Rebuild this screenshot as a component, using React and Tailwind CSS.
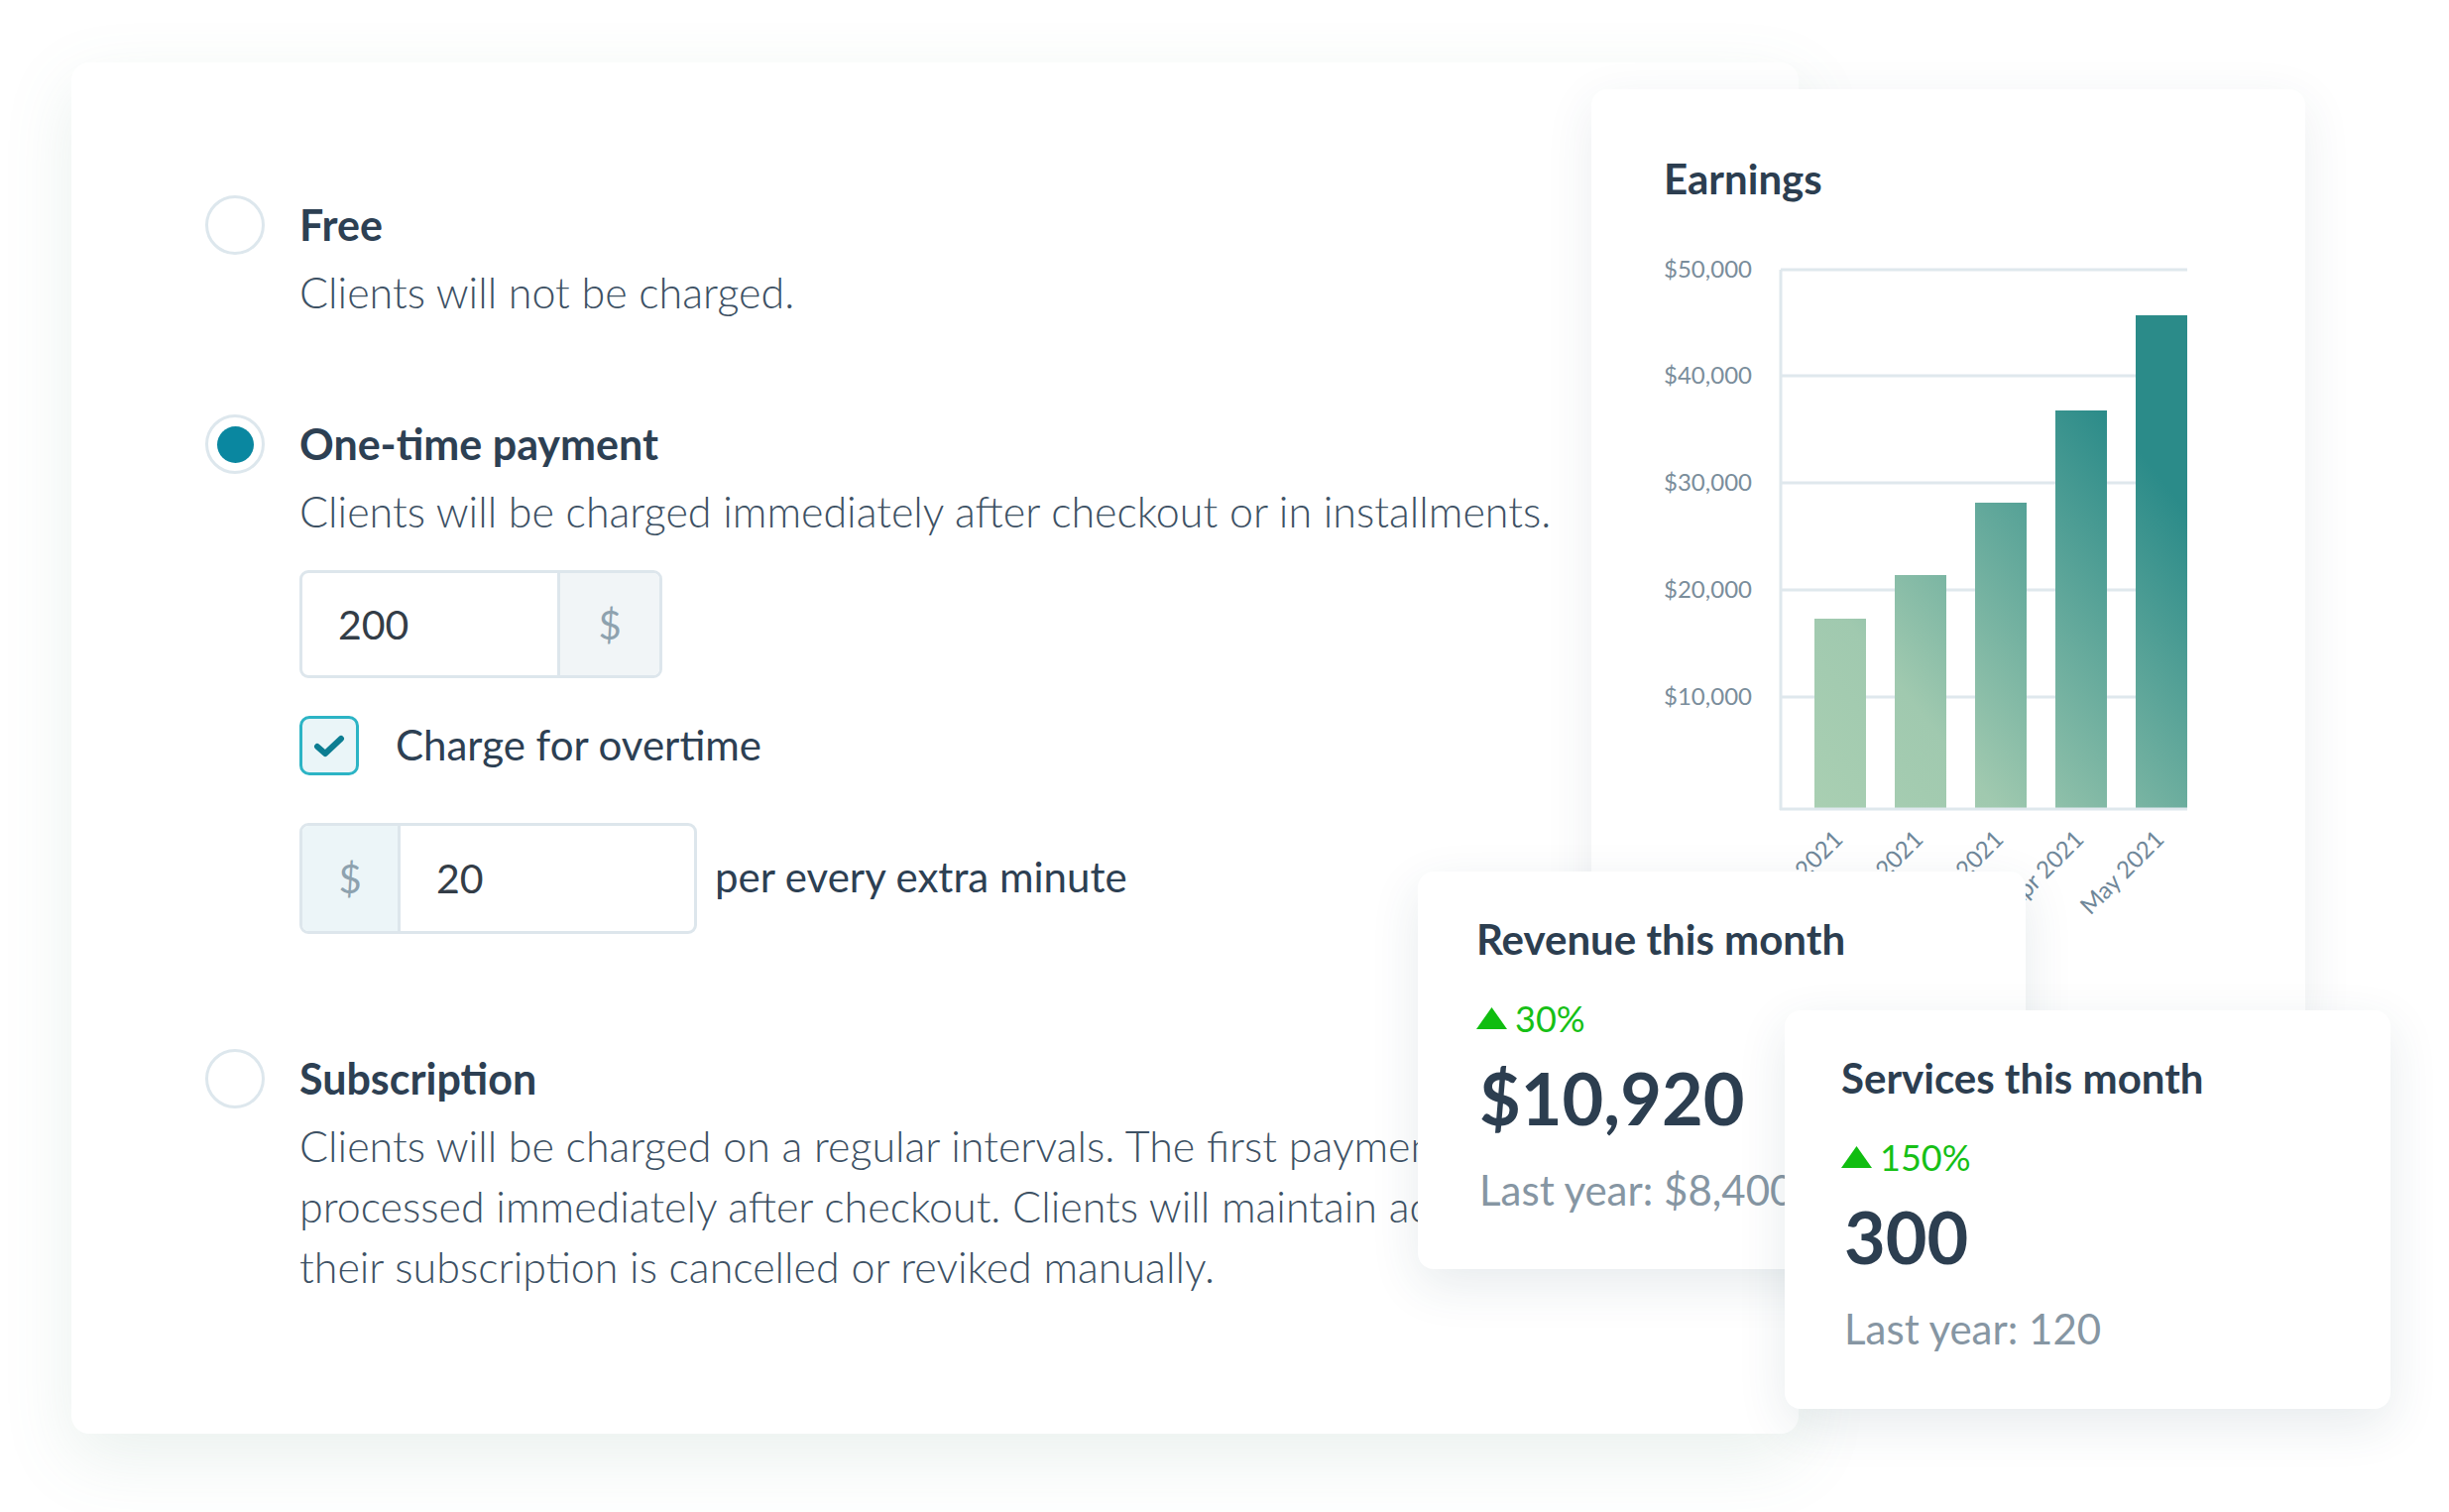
import React from 'react';

const bars = [
  { x: 1830, top: 624, label: 'Jan 2021' },
  { x: 1911, top: 580, label: 'Feb 2021' },
  { x: 1992, top: 507, label: 'Mar 2021' },
  { x: 2073, top: 414, label: 'Apr 2021' },
  { x: 2154, top: 318, label: 'May 2021' },
];

const grid = [
  { y: 272, label: '$50,000' },
  { y: 379, label: '$40,000' },
  { y: 487, label: '$30,000' },
  { y: 595, label: '$20,000' },
  { y: 703, label: '$10,000' },
];

function Radio({ checked }) {
  return (
    <div className="w-[60px] h-[60px] shrink-0 rounded-full border-[3px] border-[#dde7ed] bg-white flex items-center justify-center">
      {checked && <div className="w-[37px] h-[37px] rounded-full bg-[#0a87a0]" />}
    </div>
  );
}

function Up({ value }) {
  return (
    <div className="flex items-center gap-[8px] h-[40px] text-[36px] text-[#16c016] font-normal">
      <svg width="31" height="22" viewBox="0 0 31 22"><polygon points="15.5,0 31,22 0,22" fill="#10bd10" /></svg>
      <span>{value}</span>
    </div>
  );
}

function StatCard({ title, up, value, last, className }) {
  return (
    <div className={`absolute bg-white rounded-[16px] shadow-[0_16px_50px_rgba(40,70,90,0.11)] pt-[38px] flex flex-col ${className}`}>
      <div className="text-[42px] leading-[60px] font-bold text-[#2c3e50] whitespace-nowrap">{title}</div>
      <div className="mt-[30px]"><Up value={up} /></div>
      <div className="mt-[15px] text-[72px] leading-[90px] font-bold text-[#2c3e50] pl-[3px]">{value}</div>
      <div className="mt-[18px] text-[42px] leading-[60px] text-[#8696a3] pl-[3px] whitespace-nowrap">{last}</div>
    </div>
  );
}

export default function App() {
  return (
    <div className="relative w-[2470px] h-[1525px] bg-white overflow-hidden font-['Lato',sans-serif]">
      <div className="ml-[72px] mt-[63px] w-[1742px] h-[1383px] bg-white rounded-[18px] shadow-[0_24px_70px_rgba(90,150,120,0.13)] pl-[135px] pt-[134px]">
        <div className="flex gap-[35px]">
          <Radio />
          <div>
            <div className="text-[43px] leading-[60px] font-bold text-[#2d4053]">Free</div>
            <div className="mt-[7px] text-[43px] leading-[61px] font-light text-[#3d5164]">Clients will not be charged.</div>
          </div>
        </div>

        <div className="flex gap-[35px] mt-[93px]">
          <Radio checked />
          <div>
            <div className="text-[43px] leading-[60px] font-bold text-[#2d4053]">One-time payment</div>
            <div className="mt-[7px] text-[43px] leading-[61px] font-light text-[#3d5164] whitespace-nowrap">Clients will be charged immediately after checkout or in installments.</div>

            <div className="mt-[29px] flex w-[366px] h-[109px] border-[3px] border-[#dde6ec] rounded-[9px] overflow-hidden">
              <div className="w-[257px] flex items-center pl-[36px] text-[41px] text-[#333d47]">200</div>
              <div className="flex-1 flex items-center justify-center bg-[#f1f5f7] border-l-[3px] border-[#dde6ec] text-[40px] text-[#8ea2af]">$</div>
            </div>

            <div className="mt-[38px] flex items-center gap-[37px]">
              <div className="w-[60px] h-[60px] rounded-[10px] border-[3px] border-[#2cb4c5] bg-[#eaf5f8] flex items-center justify-center">
                <svg width="32" height="24" viewBox="0 0 32 24"><path d="M4 13 L12 20 L28 5" fill="none" stroke="#0c7d92" strokeWidth="6" strokeLinecap="round" strokeLinejoin="round" /></svg>
              </div>
              <div className="text-[42px] leading-[50px] text-[#2d4053] -mt-[3px]">Charge for overtime</div>
            </div>

            <div className="mt-[48px] flex items-center gap-[18px]">
              <div className="flex w-[401px] h-[112px] border-[3px] border-[#dde6ec] rounded-[9px] overflow-hidden">
                <div className="w-[99px] flex items-center justify-center bg-[#ecf5f8] border-r-[3px] border-[#dde6ec] text-[40px] text-[#8ea2af]">$</div>
                <div className="flex-1 flex items-center pl-[36px] text-[41px] text-[#333d47]">20</div>
              </div>
              <div className="text-[42px] leading-[50px] text-[#2d4053] -mt-[4px]">per every extra minute</div>
            </div>
          </div>
        </div>

        <div className="flex gap-[35px] mt-[116px]">
          <Radio />
          <div>
            <div className="text-[43px] leading-[60px] font-bold text-[#2d4053]">Subscription</div>
            <div className="mt-[7px] text-[43px] leading-[61px] font-light text-[#3d5164] whitespace-nowrap">
              Clients will be charged on a regular intervals. The first payment will be<br />
              processed immediately after checkout. Clients will maintain access until<br />
              their subscription is cancelled or reviked manually.
            </div>
          </div>
        </div>
      </div>

      <div className="absolute left-[1605px] top-[90px] w-[720px] h-[950px] bg-white rounded-[16px] shadow-[0_14px_50px_rgba(40,70,90,0.09)] flex flex-col">
        <div className="pl-[73px] pt-[60px] text-[42px] leading-[60px] font-bold text-[#2c3e50]">Earnings</div>
        <svg className="mt-[30px]" width="720" height="700" viewBox="1605 240 720 700">
          <defs>
            <linearGradient id="barGrad" gradientUnits="userSpaceOnUse" x1="1830" y1="816" x2="2206" y2="516">
              <stop offset="0" stopColor="#a9cfb2" />
              <stop offset="0.3" stopColor="#a0c9af" />
              <stop offset="1" stopColor="#2b8b89" />
            </linearGradient>
          </defs>
          {grid.map(g => (
            <g key={g.y}>
              <line x1="1796" y1={g.y} x2="2206" y2={g.y} stroke="#dfe8ed" strokeWidth="3" />
              <text x="1767" y={g.y + 8} textAnchor="end" fontSize="24" fill="#7a8d9b" fontFamily="Lato" fontWeight="400">{g.label}</text>
            </g>
          ))}
          {bars.map(b => (
            <rect key={b.x} x={b.x} y={b.top} width="52" height={816 - b.top} fill="url(#barGrad)" />
          ))}
          <line x1="1796" y1="272" x2="1796" y2="817" stroke="#dfe8ed" strokeWidth="3" />
          <line x1="1795" y1="816" x2="2206" y2="816" stroke="#dfe8ed" strokeWidth="3" />
          {bars.map(b => (
            <text key={b.label} x={b.x + 30} y="848" textAnchor="end" fontSize="24" fill="#6f8799" fontFamily="Lato" transform={`rotate(-45 ${b.x + 30} 848)`}>{b.label}</text>
          ))}
        </svg>
      </div>

      <StatCard className="left-[1430px] top-[879px] w-[613px] h-[401px] pl-[59px]" title="Revenue this month" up="30%" value="$10,920" last="Last year: $8,400" />
      <StatCard className="left-[1800px] top-[1019px] w-[611px] h-[402px] pl-[57px]" title="Services this month" up="150%" value="300" last="Last year: 120" />
    </div>
  );
}
